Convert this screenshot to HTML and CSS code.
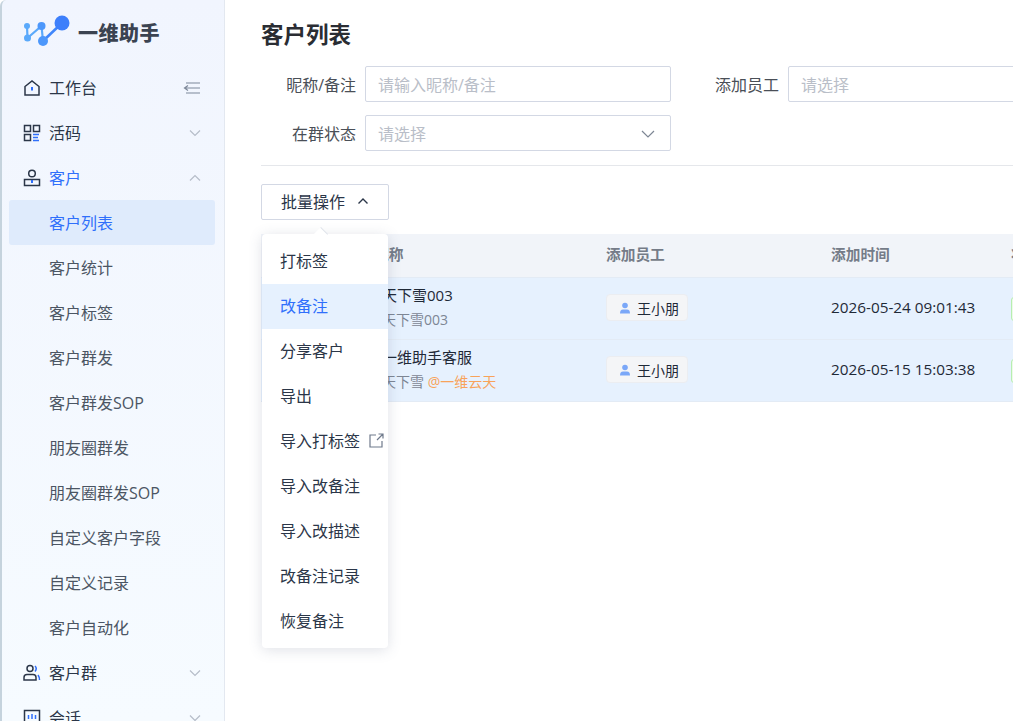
FILE: index.html
```html
<!DOCTYPE html>
<html lang="zh-CN">

<head>
    <meta charset="UTF-8">
    <title>客户列表</title>
    <link rel="stylesheet" href="styles.css">
</head>

<body>
    <div class="app">
        <aside class="sidebar">
            <div class="logo">
                <svg class="logo-mark" width="48" height="32" viewBox="0 0 48 32">
                    <path d="M4 11 L4.500 23 L18.500 11 L20 26" fill="none" stroke="#5aa9fb" stroke-width="2.200"/>
                    <path d="M20 26 L39 8" fill="none" stroke="#3f86fb" stroke-width="2.600"/>
                    <circle cx="4" cy="11" r="3" fill="#5aa9fb"/>
                    <circle cx="4.500" cy="23" r="3.500" fill="#5aa9fb"/>
                    <circle cx="18.500" cy="11" r="4" fill="#4c97fb"/>
                    <circle cx="20" cy="26" r="5" fill="#4c97fb"/>
                    <circle cx="39" cy="8" r="7.500" fill="#3d7ffb"/>
                </svg>
                <span class="logo-text">一维助手</span>
            </div>
            <nav class="menu">
                <div class="menu-item">
                    <svg class="menu-icon" width="18" height="18" viewBox="0 0 18 18" fill="none" stroke="#2b3648" stroke-width="1.500">
                        <path d="M2 7.500 L9 2 L16 7.500 V16 H2 Z"/>
                        <path d="M9 8 V11.500" stroke="#2f6ffb" stroke-width="2"/>
                    </svg>
                    <span class="menu-label">工作台</span>
                    <svg class="menu-fold" width="18" height="16" viewBox="0 0 18 16" fill="none" stroke="#7d8899" stroke-width="1.200">
                        <path d="M3 3 H17 M1.500 8 H17 M3 13 H17 M5 5.500 L1.500 8 L5 10.500"/>
                    </svg>
                </div>
                <div class="menu-item">
                    <svg class="menu-icon" width="18" height="18" viewBox="0 0 18 18" fill="none" stroke="#2b3648" stroke-width="1.500">
                        <rect x="1.500" y="1.500" width="6" height="6"/>
                        <rect x="10.500" y="1.500" width="6" height="6"/>
                        <rect x="1.500" y="10.500" width="6" height="6"/>
                        <path d="M10 10.500 H16 M10 13.500 H15 M10 16.500 H16" stroke="#2f6ffb"/>
                    </svg>
                    <span class="menu-label">活码</span>
                    <svg class="chevron" width="12" height="8" viewBox="0 0 12 8"><path d="M1 1.500 L6 6.500 L11 1.500"/></svg>
                </div>
                <div class="menu-item is-open">
                    <svg class="menu-icon" width="18" height="18" viewBox="0 0 18 18" fill="none" stroke="#2b3648" stroke-width="1.500">
                        <circle cx="9" cy="4.500" r="3.300"/>
                        <path d="M1.500 10.500 H16.500 V16.500 H1.500 Z"/>
                        <path d="M9 11 V14" stroke="#2f6ffb" stroke-width="2"/>
                    </svg>
                    <span class="menu-label">客户</span>
                    <svg class="chevron" width="12" height="8" viewBox="0 0 12 8"><path d="M1 6.500 L6 1.500 L11 6.500"/></svg>
                </div>
                <div class="menu-sub is-active">客户列表</div>
                <div class="menu-sub">客户统计</div>
                <div class="menu-sub">客户标签</div>
                <div class="menu-sub">客户群发</div>
                <div class="menu-sub">客户群发SOP</div>
                <div class="menu-sub">朋友圈群发</div>
                <div class="menu-sub">朋友圈群发SOP</div>
                <div class="menu-sub">自定义客户字段</div>
                <div class="menu-sub">自定义记录</div>
                <div class="menu-sub">客户自动化</div>
                <div class="menu-item">
                    <svg class="menu-icon" width="18" height="18" viewBox="0 0 18 18" fill="none" stroke="#2b3648" stroke-width="1.500">
                        <circle cx="7" cy="4.500" r="3"/>
                        <path d="M1 16 V13.500 Q1 10.500 4 10.500 H10 Q13 10.500 13 13.500 V16 Z"/>
                        <path d="M12 2 Q14.500 4.500 12 7.500 M15 11 Q16.500 13 16.500 16" stroke="#2f6ffb"/>
                    </svg>
                    <span class="menu-label">客户群</span>
                    <svg class="chevron" width="12" height="8" viewBox="0 0 12 8"><path d="M1 1.500 L6 6.500 L11 1.500"/></svg>
                </div>
                <div class="menu-item">
                    <svg class="menu-icon" width="18" height="18" viewBox="0 0 18 18" fill="none" stroke="#2b3648" stroke-width="1.500">
                        <rect x="1.500" y="1.500" width="15" height="14"/>
                        <path d="M5.500 6 V10 M9 5 V10 M12.500 6 V10" stroke="#2f6ffb"/>
                    </svg>
                    <span class="menu-label">会话</span>
                    <svg class="chevron" width="12" height="8" viewBox="0 0 12 8"><path d="M1 1.500 L6 6.500 L11 1.500"/></svg>
                </div>
            </nav>
        </aside>

        <main class="content">
            <h1 class="page-title">客户列表</h1>
            <div class="filters">
                <div class="filter-row">
                    <label class="filter-label">昵称/备注</label>
                    <div class="field">请输入昵称/备注</div>
                    <label class="filter-label filter-label-2">添加员工</label>
                    <div class="field field-wide">请选择</div>
                </div>
                <div class="filter-row">
                    <label class="filter-label">在群状态</label>
                    <div class="field">
                        请选择
                        <svg class="field-arrow" width="14" height="8" viewBox="0 0 14 8"><path d="M1 1 L7 7 L13 1"/></svg>
                    </div>
                </div>
            </div>

            <div class="toolbar">
                <button class="batch-button">
                    批量操作
                    <svg width="12" height="8" viewBox="0 0 12 8"><path d="M1.500 6.500 L6 2 L10.500 6.500"/></svg>
                </button>
            </div>

            <div class="table">
                <div class="table-row table-head">
                    <div class="name-cell head-name">昵称</div>
                    <div>添加员工</div>
                    <div>添加时间</div>
                    <div>状态</div>
                </div>
                <div class="table-row">
                    <div class="name-cell">
                        <p class="cust-name">天下雪003</p>
                        <p class="cust-note">天下雪003</p>
                    </div>
                    <div class="staff-cell">
                        <span class="staff-tag">
                            <svg width="12" height="12" viewBox="0 0 12 12"><circle cx="6" cy="3.500" r="2.800"/><path d="M1 11.500 Q1 7.500 4 7.500 H8 Q11 7.500 11 11.500 Z"/></svg>
                            王小朋
                        </span>
                    </div>
                    <div class="time-cell">2026-05-24 09:01:43</div>
                    <div><span class="status-tag">正常</span></div>
                </div>
                <div class="table-row">
                    <div class="name-cell">
                        <p class="cust-name">一维助手客服</p>
                        <p class="cust-note">天下雪 <span class="cust-corp">@一维云天</span></p>
                    </div>
                    <div class="staff-cell">
                        <span class="staff-tag">
                            <svg width="12" height="12" viewBox="0 0 12 12"><circle cx="6" cy="3.500" r="2.800"/><path d="M1 11.500 Q1 7.500 4 7.500 H8 Q11 7.500 11 11.500 Z"/></svg>
                            王小朋
                        </span>
                    </div>
                    <div class="time-cell">2026-05-15 15:03:38</div>
                    <div><span class="status-tag">正常</span></div>
                </div>
            </div>

            <div class="dropdown">
                <span class="dropdown-arrow"></span>
                <ul class="dropdown-list">
                    <li>打标签</li>
                    <li class="is-hover">改备注</li>
                    <li>分享客户</li>
                    <li>导出</li>
                    <li>导入打标签
                        <svg class="link-icon" width="15" height="15" viewBox="0 0 15 15"><path d="M7 2 H1 V14 H13 V8 M8 7 L14 1 M9.500 1 H14 V5.500"/></svg>
                    </li>
                    <li>导入改备注</li>
                    <li>导入改描述</li>
                    <li>改备注记录</li>
                    <li>恢复备注</li>
                </ul>
            </div>
        </main>
    </div>
</body>

</html>
```

FILE: styles.css
```css
* {
    box-sizing: border-box;
}

html,
body {
    margin: 0;
    height: 100%;
    overflow: hidden;
}

body {
    background-color: white;
    color: #1f2937;
    font-family: "Open Sans", "Noto Sans CJK SC", sans-serif;
    font-size: 16px;
}

p {
    margin: 0;
}

ul {
    list-style: none;
    margin: 0;
    padding: 0;
}

.app {
    display: flex;
    height: 721px;
}

.sidebar {
    width: 225px;
    flex-shrink: 0;
    overflow: hidden;
    background: linear-gradient(180deg, #f1f5fe, #f6fbff);
    border-left: 2px solid #c5d3dd;
    border-right: 1px solid #e3e8f0;
    border-top-left-radius: 6px;
}

.logo {
    display: flex;
    align-items: center;
    gap: 7px;
    height: 65px;
    padding-left: 21px;
}

.logo-mark {
    margin-top: -3px;
}

.logo-text {
    color: #3b4351;
    font-size: 20px;
    font-weight: 900;
    letter-spacing: 0.500px;
}

.menu-item,
.menu-sub {
    height: 45px;
    display: flex;
    align-items: center;
}

.menu-item {
    padding-left: 21px;
    padding-right: 23px;
    color: #2b3648;
}

.menu-icon {
    margin-right: 8px;
}

.menu-label {
    flex: 1;
    padding-top: 2px;
    line-height: 43px;
}

.menu-item.is-open .menu-label {
    color: #2f6ffb;
}

.chevron path {
    fill: none;
    stroke: #b6bdc9;
    stroke-width: 1.200;
}

.menu-sub {
    margin-left: 7px;
    width: 206px;
    padding-top: 2px;
    padding-left: 40px;
    line-height: 43px;
    color: #4b5563;
    border-radius: 3px;
}

.menu-sub.is-active {
    background-color: #dfebfc;
    color: #2f6ffb;
}

.content {
    flex: 1;
    min-width: 0;
    position: relative;
    overflow: hidden;
    padding-left: 36px;
}

.page-title {
    margin: 0;
    height: 66px;
    padding-top: 17px;
    font-size: 22.500px;
    line-height: 36px;
    font-weight: 700;
    color: #2a2d33;
}

.filters {
    display: flex;
    flex-direction: column;
    gap: 13px;
    padding-bottom: 14px;
    border-bottom: 1px solid #e5e7eb;
}

.filter-row {
    display: flex;
    align-items: center;
    height: 36px;
    gap: 9px;
}

.filter-label {
    flex-shrink: 0;
    width: 95px;
    text-align: right;
    color: #4a4f57;
    white-space: nowrap;
}

.filter-label-2 {
    width: 99px;
}

.field {
    position: relative;
    flex-shrink: 0;
    width: 306px;
    height: 36px;
    line-height: 36px;
    padding-left: 12px;
    border: 1px solid #d3d8e4;
    border-radius: 2px;
    color: #b9bec8;
}

.field-wide {
    width: 400px;
}

.field-arrow {
    position: absolute;
    right: 15px;
    top: 14px;
}

.field-arrow path {
    fill: none;
    stroke: #7d8694;
    stroke-width: 1.200;
}

.toolbar {
    padding-top: 18px;
    padding-bottom: 14px;
}

.batch-button {
    display: flex;
    align-items: center;
    gap: 12px;
    width: 128px;
    height: 36px;
    padding: 0 0 2px 19px;
    background-color: white;
    border: 1px solid #d3d8e4;
    border-radius: 2px;
    color: #2b3648;
    font-family: inherit;
    font-size: 16px;
}

.batch-button path {
    fill: none;
    stroke: #2b3648;
    stroke-width: 1.400;
}

.table {
    width: 800px;
    font-size: 15px;
}

.table-row {
    display: grid;
    grid-template-columns: 345px 225px 180px 50px;
    align-items: center;
    height: 62px;
    background-color: #e6f1fe;
    border-bottom: 1px solid #e3ebf5;
    color: #1f2937;
}

.table-head {
    height: 44px;
    padding-bottom: 5px;
    background-color: #f1f4f9;
    color: #757c88;
    font-weight: 700;
    font-size: 14.700px;
}

.name-cell {
    padding-left: 121px;
    padding-bottom: 3px;
    white-space: nowrap;
}

.head-name {
    padding-left: 113px;
    padding-bottom: 0;
}

.time-cell {
    font-size: 15.300px;
    padding-bottom: 3px;
}

.staff-cell {
    display: flex;
    padding-bottom: 2px;
}

.cust-name {
    line-height: 24px;
}

.cust-note {
    margin-top: 2px;
    line-height: 22px;
    font-size: 14px;
    color: #7d8694;
}

.cust-corp {
    color: #f8a35a;
}

.staff-tag {
    display: inline-flex;
    align-items: center;
    gap: 6px;
    height: 27px;
    width: 82px;
    padding-left: 12px;
    background-color: #f4f5f7;
    border: 1px solid #ebedf1;
    border-radius: 4px;
    font-size: 14px;
    white-space: nowrap;
}

.staff-tag path,
.staff-tag circle {
    fill: #7aa7f8;
}

.status-tag {
    display: inline-block;
    height: 24px;
    padding: 0 8px;
    line-height: 22px;
    font-size: 13px;
    color: #35b34a;
    background-color: #ecfbe9;
    border: 1px solid #b7eeb0;
    border-radius: 3px;
    white-space: nowrap;
}

/* batch menu, open over the table */
.dropdown {
    position: absolute;
    left: 37px;
    top: 234px;
    width: 126px;
    background-color: white;
    border-radius: 4px;
    box-shadow: 0 2px 14px rgba(80, 90, 120, 0.18);
}

.dropdown-arrow {
    position: absolute;
    left: 54px;
    top: -5px;
    width: 10px;
    height: 10px;
    background-color: white;
    border-top: 1px solid #dfe3ea;
    transform: rotate(45deg);
}

.dropdown-list {
    position: relative;
    padding: 5px 0 4px;
}

.dropdown-list li {
    position: relative;
    height: 45px;
    line-height: 44px;
    padding-left: 18px;
    color: #2b3648;
    white-space: nowrap;
}

.dropdown-list li.is-hover {
    background-color: #e6f1fe;
    color: #2f6ffb;
}

.link-icon {
    position: absolute;
    right: 4px;
    top: 14px;
}

.link-icon path {
    fill: none;
    stroke: #6f7a8c;
    stroke-width: 1.200;
}
```
